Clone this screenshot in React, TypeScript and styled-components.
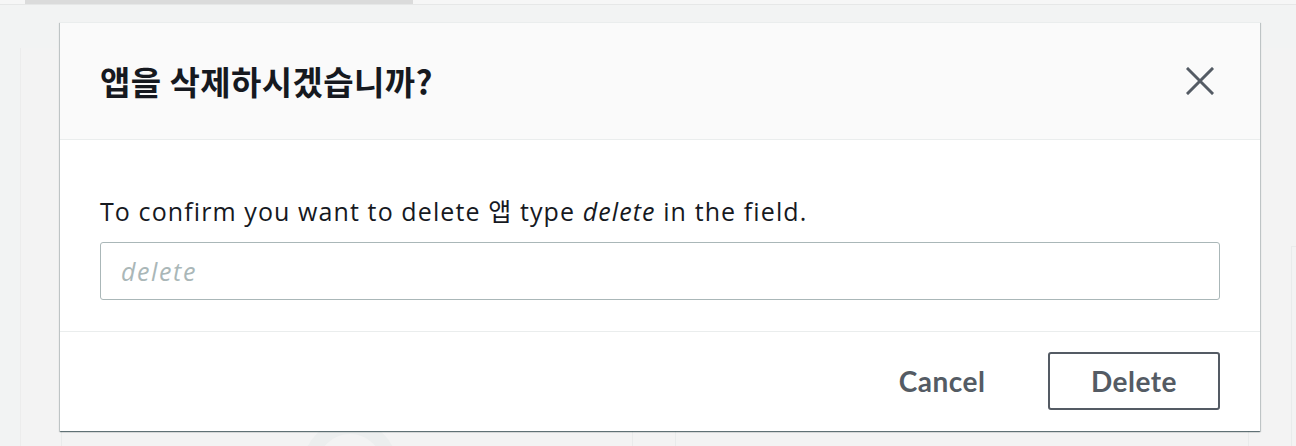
import React from "react";
import styled, { createGlobalStyle } from "styled-components";

const GlobalStyle = createGlobalStyle`
  html, body {
    margin: 0;
    padding: 0;
    background: #f2f3f3;
  }
  body {
    font-family: "Open Sans", "Noto Sans CJK KR", sans-serif;
    color: #16191f;
  }
`;

const Page = styled.div`
  position: relative;
  width: 1296px;
  height: 446px;
  overflow: hidden;
  background: #f2f3f3;
`;

const TopStrip = styled.div`
  display: flex;
  height: 4px;
  background: #f6f6f6;
  border-bottom: 1px solid #e6e7e7;
`;

const ActiveTab = styled.div`
  width: 388px;
  margin-left: 25px;
  background: #dbdbdb;
`;

const Panel = styled.div`
  margin: 43px 0 0 20px;
  height: 400px;
  background: #f3f3f3;
  border-left: 1px solid #ececec;
  padding: 198px 0 0 40px;
  box-sizing: border-box;
`;

const CardGrid = styled.div`
  display: grid;
  grid-template-columns: 572px 574px 572px;
  gap: 42px;
`;

const Card = styled.div`
  height: 260px;
  border: 1px solid #e9ebeb;
  background: #f3f3f3;
  overflow: hidden;
`;

const Watermark = styled.svg`
  display: block;
  margin: 170px 0 0 238px;
`;

const Modal = styled.div`
  position: absolute;
  left: 60px;
  top: 22px;
  width: 1200px;
  background: #ffffff;
  border-top: 1px solid #eaeded;
  box-shadow: 0 1px 1px 0 rgba(0, 28, 36, 0.45), 1px 1px 1px 0 rgba(0, 28, 36, 0.15),
    -1px 1px 1px 0 rgba(0, 28, 36, 0.15);
`;

const Header = styled.div`
  height: 116px;
  display: flex;
  align-items: center;
  justify-content: space-between;
  padding: 0 46px 0 40px;
  background: #fafafa;
  border-bottom: 1px solid #eaeded;
`;

const Title = styled.h2`
  margin: 0;
  font-family: "Noto Sans CJK KR", "Noto Sans", sans-serif;
  font-weight: 700;
  font-size: 33px;
  letter-spacing: 0.4px;
  color: #16191f;
  line-height: 42px;
`;

const CloseButton = styled.button`
  display: flex;
  align-items: center;
  justify-content: center;
  width: 28px;
  height: 28px;
  padding: 0;
  border: none;
  background: transparent;
  cursor: pointer;
`;

const Body = styled.div`
  padding: 54px 40px 31px 40px;
  border-bottom: 1px solid #eaeded;
`;

const Prompt = styled.p`
  margin: 0 0 14px 0;
  font-size: 25px;
  letter-spacing: 1.1px;
  line-height: 34px;
  color: #16191f;
  em {
    font-style: italic;
  }
`;

const TextInput = styled.input`
  display: block;
  box-sizing: border-box;
  width: 100%;
  height: 58px;
  padding: 0 20px;
  border: 1px solid #aab7b8;
  border-radius: 3px;
  font-family: "Open Sans", "Noto Sans CJK KR", sans-serif;
  font-size: 25px;
  letter-spacing: 1.6px;
  font-style: italic;
  color: #16191f;
  background: #fff;
  outline: none;
  &::placeholder {
    color: #aab7b8;
    font-style: italic;
  }
`;

const Footer = styled.div`
  display: flex;
  justify-content: flex-end;
  align-items: center;
  gap: 20px;
  padding: 20px 40px 21px 40px;
`;

const Button = styled.button<{ $outlined?: boolean }>`
  box-sizing: border-box;
  width: 172px;
  height: 58px;
  border-radius: 3px;
  border: 2px solid ${(p) => (p.$outlined ? "#545b64" : "transparent")};
  background: #fff;
  color: #545b64;
  font-family: "Lato", "Open Sans", sans-serif;
  font-weight: 700;
  font-size: 28px;
  letter-spacing: 0.5px;
  cursor: pointer;
`;

export default function App() {
  return (
    <>
      <GlobalStyle />
      <Page>
        <TopStrip>
          <ActiveTab />
        </TopStrip>
        <Panel>
          <CardGrid>
            <Card>
              <Watermark width="100" height="100" viewBox="0 0 100 100">
                <circle cx="50" cy="50" r="40" fill="none" stroke="#eceeee" strokeWidth="14" />
              </Watermark>
            </Card>
            <Card />
            <Card />
          </CardGrid>
        </Panel>
        <Modal role="dialog" aria-modal="true">
          <Header>
            <Title>앱을 삭제하시겠습니까?</Title>
            <CloseButton aria-label="Close">
              <svg width="28" height="28" viewBox="0 0 28 28">
                <path d="M2 2 L26 26 M26 2 L2 26" stroke="#545b64" strokeWidth="3" strokeLinecap="square" fill="none" />
              </svg>
            </CloseButton>
          </Header>
          <Body>
            <Prompt>
              To confirm you want to delete 앱 type <em>delete</em> in the field.
            </Prompt>
            <TextInput placeholder="delete" />
          </Body>
          <Footer>
            <Button>Cancel</Button>
            <Button $outlined>Delete</Button>
          </Footer>
        </Modal>
      </Page>
    </>
  );
}
